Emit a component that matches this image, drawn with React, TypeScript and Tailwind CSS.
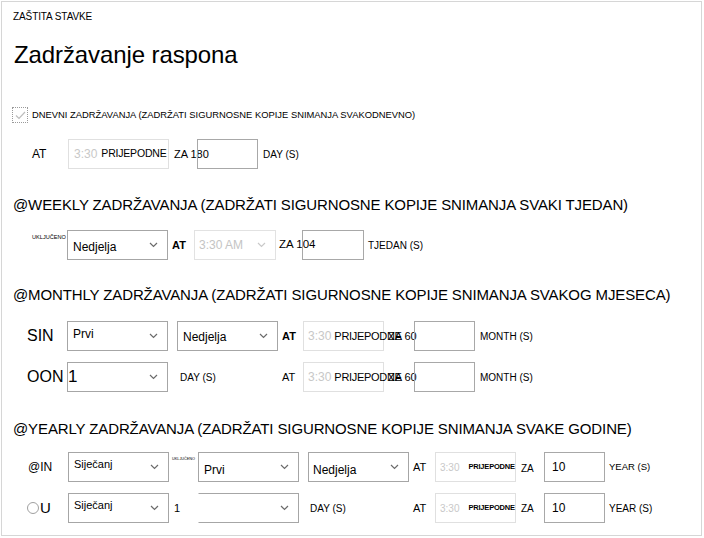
import React from "react";

const Chevron = ({ light }: { light?: boolean }) => (
    <svg width="9" height="6" viewBox="0 0 9 6" className="shrink-0">
        <polyline points="1,1 4.5,4.5 8,1" fill="none" stroke={light ? "#c9c9c9" : "#6b6b6b"} strokeWidth="1.2" />
    </svg>
);

const Select = ({ w, children, textCls = "", disabled }: { w: string; children?: React.ReactNode; textCls?: string; disabled?: boolean }) => (
    <div className={`flex h-[30px] shrink-0 items-center border pr-[9px] ${disabled ? "border-[#e2e2e2]" : "border-[#a6a6a6]"} ${w}`}>
        <div className={`min-w-0 flex-1 whitespace-nowrap ${textCls}`}>{children}</div>
        <Chevron light={disabled} />
    </div>
);

const TimeBox = ({ small }: { small?: boolean }) => (
    <div className="flex h-[30px] w-[81px] shrink-0 items-center border border-[#e0e0e0] whitespace-nowrap">
        {small ? (
            <>
                <span className="pl-[4px] text-[10px] text-[#c8c8c8]">3:30</span>
                <span className="ml-[9px] text-[7.5px] font-semibold tracking-[-0.2px]">PRIJEPODNE</span>
            </>
        ) : (
            <>
                <span className="pl-[4px] text-[12px] text-[#c8c8c8]">3:30</span>
                <span className="ml-[3px] text-[11px] tracking-[-0.3px]">PRIJEPODNE</span>
            </>
        )}
    </div>
);

const Input = ({ w, children }: { w: string; children?: React.ReactNode }) => (
    <div className={`flex h-[30px] shrink-0 items-center border border-[#a8a8a8] bg-transparent ${w}`}>{children}</div>
);

const Heading = ({ children }: { children: React.ReactNode }) => (
    <div className="flex h-[20px] items-center whitespace-nowrap pl-[11px] text-[15px] tracking-[-0.12px]">{children}</div>
);

const App = () => {
    return (
        <div className="h-[538px] w-[704px] bg-white font-['Liberation_Sans',Arial,sans-serif] text-black">
            <div className="ml-[1px] mt-[1px] h-[535px] w-[701px] border border-[#d6d6d6]">
                <div className="mt-[6px] flex h-[16px] items-center pl-[11px] text-[10px] tracking-[-0.1px]">ZAŠTITA STAVKE</div>

                <div className="mt-[16px] flex h-[30px] items-center pl-[12px] text-[24px] tracking-[-0.1px]">Zadržavanje raspona</div>

                <div className="mt-[37px] flex h-[16px] items-center pl-[10px]">
                    <div className="flex h-[16px] w-[16px] items-center justify-center border border-dotted border-[#9a9a9a]">
                        <svg width="11" height="9" viewBox="0 0 11 9">
                            <polyline points="1,4.5 4,7.5 10,1" fill="none" stroke="#bdbdbd" strokeWidth="1.2" />
                        </svg>
                    </div>
                    <span className="ml-[4px] whitespace-nowrap text-[9.4px]">DNEVNI ZADRŽAVANJA (ZADRŽATI SIGURNOSNE KOPIJE SNIMANJA SVAKODNEVNO)</span>
                </div>

                <div className="mt-[16px] flex h-[30px] items-center pl-[30px]">
                    <span className="w-[36px] text-[12px]">AT</span>
                    <div className="flex h-[30px] w-[101px] shrink-0 items-center border border-[#e0e0e0] whitespace-nowrap">
                        <span className="pl-[5px] text-[12px] text-[#c8c8c8]">3:30</span>
                        <span className="ml-[4px] text-[10.5px] tracking-[-0.2px]">PRIJEPODNE</span>
                    </div>
                    <span className="ml-[5px] w-[23px] whitespace-nowrap text-[11px]">ZA 180</span>
                    <Input w="w-[61px]" />
                    <span className="ml-[5px] text-[10px]">DAY (S)</span>
                </div>

                <div className="mt-[26px]">
                    <Heading>@WEEKLY ZADRŽAVANJA (ZADRŽATI SIGURNOSNE KOPIJE SNIMANJA SVAKI TJEDAN)</Heading>
                </div>

                <div className="mt-[15px] flex h-[30px] items-center pl-[30px]">
                    <span className="w-[35px] self-start pt-[5px] text-[5.6px] leading-none">UKLJUČENO</span>
                    <Select w="w-[101px]" textCls="pl-[5px] pt-[3px] text-[12px]">Nedjelja</Select>
                    <span className="ml-[4px] w-[22px] text-[11px] font-bold">AT</span>
                    <Select w="w-[82px]" textCls="pl-[4px] text-[12px] text-[#c4c4c4]" disabled>3:30 AM</Select>
                    <span className="ml-[3px] w-[23px] whitespace-nowrap text-[11.5px]">ZA 104</span>
                    <Input w="w-[62px]" />
                    <span className="ml-[4px] text-[10px]">TJEDAN (S)</span>
                </div>

                <div className="mt-[25px]">
                    <Heading>@MONTHLY ZADRŽAVANJA (ZADRŽATI SIGURNOSNE KOPIJE SNIMANJA SVAKOG MJESECA)</Heading>
                </div>

                <div className="mt-[16px] flex h-[30px] items-center pl-[25px]">
                    <span className="w-[40px] text-[16px]">SIN</span>
                    <Select w="w-[101px]" textCls="pl-[5px] pb-[4px] text-[12px]">Prvi</Select>
                    <div className="ml-[9px]">
                        <Select w="w-[101px]" textCls="pl-[5px] pt-[2px] text-[12px]">Nedjelja</Select>
                    </div>
                    <span className="ml-[4px] w-[21px] text-[11px] font-bold">AT</span>
                    <TimeBox />
                    <span className="ml-[4px] w-[26px] whitespace-nowrap text-[11px]">ZA 60</span>
                    <Input w="w-[61px]" />
                    <span className="ml-[5px] text-[10px]">MONTH (S)</span>
                </div>

                <div className="mt-[11px] flex h-[30px] items-center pl-[25px]">
                    <span className="w-[40px] text-[16px]">OON</span>
                    <Select w="w-[101px]" textCls="text-[17px]">1</Select>
                    <span className="ml-[12px] w-[102px] text-[10px]">DAY (S)</span>
                    <span className="w-[21px] text-[11px]">AT</span>
                    <TimeBox />
                    <span className="ml-[4px] w-[26px] whitespace-nowrap text-[11px]">ZA 60</span>
                    <Input w="w-[61px]" />
                    <span className="ml-[5px] text-[10px]">MONTH (S)</span>
                </div>

                <div className="mt-[27px]">
                    <Heading>@YEARLY ZADRŽAVANJA (ZADRŽATI SIGURNOSNE KOPIJE SNIMANJA SVAKE GODINE)</Heading>
                </div>

                <div className="mt-[13px] flex h-[30px] items-center pl-[26px]">
                    <span className="w-[40px] text-[12px]">@IN</span>
                    <Select w="w-[101px]" textCls="self-start pl-[5px] pt-[3px] text-[11px]">Siječanj</Select>
                    <span className="ml-[3px] w-[26px] self-start pt-[6px] text-[3.8px] leading-none">UKLJUČENO</span>
                    <Select w="w-[101px]" textCls="pl-[5px] pt-[6px] text-[12px]">Prvi</Select>
                    <div className="ml-[9px]">
                        <Select w="w-[101px]" textCls="pl-[4px] pt-[6px] text-[12px]">Nedjelja</Select>
                    </div>
                    <span className="ml-[4px] w-[22px] text-[11px]">AT</span>
                    <TimeBox small />
                    <span className="ml-[5px] w-[23px] pt-[3px] text-[10px]">ZA</span>
                    <Input w="w-[61px]"><span className="pl-[7px] text-[12px]">10</span></Input>
                    <span className="ml-[4px] text-[9.5px]">YEAR (S)</span>
                </div>

                <div className="mt-[11px] flex h-[30px] items-center pl-[25px]">
                    <div className="flex w-[41px] items-center">
                        <span className="h-[12px] w-[12px] rounded-full border border-[#a0a0a0]" />
                        <span className="ml-[1px] text-[15px]">U</span>
                    </div>
                    <Select w="w-[101px]" textCls="self-start pl-[5px] pt-[3px] text-[11px]">Siječanj</Select>
                    <span className="ml-[5px] w-[24px] text-[11px]">1</span>
                    <Select w="w-[101px] border-l-transparent" />
                    <span className="ml-[11px] w-[103px] text-[10px]">DAY (S)</span>
                    <span className="w-[22px] text-[11px]">AT</span>
                    <TimeBox small />
                    <span className="ml-[5px] w-[23px] text-[10px]">ZA</span>
                    <Input w="w-[61px]"><span className="pl-[7px] text-[12px]">10</span></Input>
                    <span className="ml-[4px] text-[10px]">YEAR (S)</span>
                </div>
            </div>
        </div>
    );
};

export default App;
